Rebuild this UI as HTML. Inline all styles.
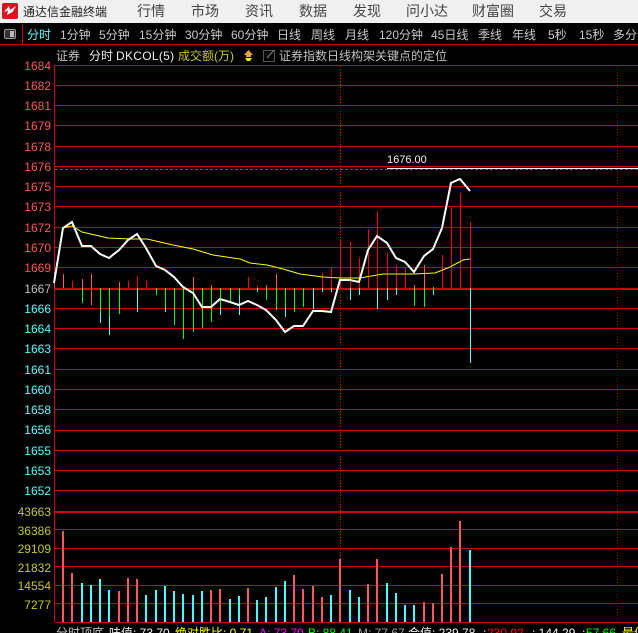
<!DOCTYPE html>
<html><head><meta charset="utf-8">
<style>
html,body{margin:0;padding:0;background:#000;}
body{width:638px;height:633px;overflow:hidden;position:relative;}
svg{position:absolute;left:0;top:0;}
text{font-family:"Liberation Sans","Noto Sans CJK SC",sans-serif;font-size:12px;}
.m{font-size:14px;fill:#444;}
.t{fill:#c8c8c8;}
.p{fill:#ff5858;text-anchor:end;}
.c{fill:#58ffff;text-anchor:end;}
.v{fill:#c8c828;text-anchor:end;}
</style></head>
<body>
<svg width="638" height="633" viewBox="0 0 638 633" xmlns="http://www.w3.org/2000/svg">
<rect width="638" height="633" fill="#000"/>
<rect width="638" height="23" fill="#f0f0f0"/>
<!-- logo -->
<rect x="2" y="3" width="16" height="16" rx="2" fill="#d8141c"/>
<path d="M4 12 L9 6 L10 10 L16 6 L12.500 12 L7 15 L8 10.500 Z" fill="#fff"/>
<text x="23" y="16" style="font-size:12px" fill="#222">通达信金融终端</text>
<text class="m" x="137" y="16">行情</text>
<text class="m" x="191" y="16">市场</text>
<text class="m" x="245" y="16">资讯</text>
<text class="m" x="299" y="16">数据</text>
<text class="m" x="353" y="16">发现</text>
<text class="m" x="406" y="16">问小达</text>
<text class="m" x="472" y="16">财富圈</text>
<text class="m" x="539" y="16">交易</text>
<!-- toolbar -->
<rect x="4.5" y="29.5" width="11" height="9" rx="1.5" fill="#333" stroke="#999"/>
<rect x="10" y="31" width="4" height="6" fill="#bbb"/>
<g shape-rendering="crispEdges" fill="#d00000">
<rect x="22" y="25" width="1" height="19"/>
<rect x="0" y="44" width="638" height="1"/>
</g>
<text x="27" y="39" fill="#58ffff">分时</text>
<text class="t" x="60" y="39">1分钟</text>
<text class="t" x="99" y="39">5分钟</text>
<text class="t" x="139" y="39">15分钟</text>
<text class="t" x="185" y="39">30分钟</text>
<text class="t" x="231" y="39">60分钟</text>
<text class="t" x="277" y="39">日线</text>
<text class="t" x="311" y="39">周线</text>
<text class="t" x="345" y="39">月线</text>
<text class="t" x="379" y="39">120分钟</text>
<text class="t" x="431" y="39">45日线</text>
<text class="t" x="478" y="39">季线</text>
<text class="t" x="512" y="39">年线</text>
<text class="t" x="548" y="39">5秒</text>
<text class="t" x="579" y="39">15秒</text>
<text class="t" x="613" y="39">多分时</text>
<!-- info row -->
<text x="56" y="60" fill="#c0c0c0">证券</text>
<text x="89" y="60" fill="#f0f0f0">分时</text>
<text x="116" y="60" fill="#f0f0f0" style="letter-spacing:.3px">DKCOL(5)</text>
<text x="178" y="60" fill="#c8c828">成交额(万)</text>
<path d="M248.500 50 L253 55 L251 55 L251 57 L246 57 L246 55 L244 55 Z" fill="#f0a040"/>
<path d="M245 58 H252 L250 61 H247 Z" fill="#f0e020"/>
<rect x="263.500" y="50.500" width="11" height="11" fill="none" stroke="#555"/>
<path d="M267 58 L274 50" stroke="#888" fill="none"/>
<text x="279" y="60" fill="#c0c0c0">证券指数日线构架关键点的定位</text>
<!-- grid -->
<g shape-rendering="crispEdges" fill="#d00000">
<rect x="54" y="65" width="1" height="557"/>
<rect x="55" y="65" width="583" height="1"/><rect x="55" y="85" width="583" height="1"/><rect x="55" y="105" width="583" height="1"/><rect x="55" y="125" width="583" height="1"/><rect x="55" y="146" width="583" height="1"/><rect x="55" y="166" width="583" height="1"/><rect x="55" y="186" width="583" height="1"/><rect x="55" y="206" width="583" height="1"/><rect x="55" y="227" width="583" height="1"/><rect x="55" y="247" width="583" height="1"/><rect x="55" y="267" width="583" height="1"/><rect x="55" y="288" width="583" height="2"/><rect x="55" y="308" width="583" height="1"/><rect x="55" y="328" width="583" height="1"/><rect x="55" y="348" width="583" height="1"/><rect x="55" y="369" width="583" height="1"/><rect x="55" y="389" width="583" height="1"/><rect x="55" y="409" width="583" height="1"/><rect x="55" y="430" width="583" height="1"/><rect x="55" y="450" width="583" height="1"/><rect x="55" y="470" width="583" height="1"/><rect x="55" y="490" width="583" height="1"/>
<rect x="55" y="511" width="583" height="2"/><rect x="55" y="529" width="583" height="1"/><rect x="55" y="548" width="583" height="1"/><rect x="55" y="566" width="583" height="1"/><rect x="55" y="585" width="583" height="1"/><rect x="55" y="603" width="583" height="1"/><rect x="55" y="622" width="583" height="1"/>
</g>
<path d="M340.500 66 V560" stroke="#e00000" stroke-dasharray="1 2" shape-rendering="crispEdges"/>
<path d="M617.500 66 V622" stroke="#a00000" stroke-dasharray="1 2" shape-rendering="crispEdges"/>
<path d="M55 169.500 H638" stroke="#a020a0" stroke-dasharray="3 2" shape-rendering="crispEdges"/>
<path d="M387 168.500 H638" stroke="#fff" shape-rendering="crispEdges"/>
<text x="387" y="163" style="font-size:11px" fill="#f0f0f0">1676.00</text>
<!-- price labels -->
<text class="p" x="51" y="70">1684</text>
<text class="p" x="51" y="90">1682</text>
<text class="p" x="51" y="110">1681</text>
<text class="p" x="51" y="130">1679</text>
<text class="p" x="51" y="151">1678</text>
<text class="p" x="51" y="171">1676</text>
<text class="p" x="51" y="191">1675</text>
<text class="p" x="51" y="211">1673</text>
<text class="p" x="51" y="232">1672</text>
<text class="p" x="51" y="252">1670</text>
<text class="p" x="51" y="272">1669</text>
<text x="51" y="293" text-anchor="end" fill="#c0c0c0">1667</text>
<text class="c" x="51" y="313">1666</text>
<text class="c" x="51" y="333">1664</text>
<text class="c" x="51" y="353">1663</text>
<text class="c" x="51" y="374">1661</text>
<text class="c" x="51" y="394">1660</text>
<text class="c" x="51" y="414">1658</text>
<text class="c" x="51" y="434">1656</text>
<text class="c" x="51" y="455">1655</text>
<text class="c" x="51" y="475">1653</text>
<text class="c" x="51" y="495">1652</text>
<text class="v" x="51" y="516">43663</text>
<text class="v" x="51" y="535">36386</text>
<text class="v" x="51" y="553">29109</text>
<text class="v" x="51" y="572">21832</text>
<text class="v" x="51" y="590">14554</text>
<text class="v" x="51" y="609">7277</text>
<!-- tick bars -->
<g fill="none" shape-rendering="crispEdges" stroke-width="1">
<path stroke="#ff0000" d="M72.500 281V288M128.500 281V288M137.500 276V288M146.500 281V288M248.500 277V288M257.500 286V288M322.500 273V288M331.500 267V288M340.500 239V288M350.500 242V288M359.500 258V288M368.500 229V288M377.500 211V288M387.500 253V288M396.500 265V288M405.500 267V288M442.500 255V288M451.500 208V288M460.500 193V288M470.500 222V288"/>
<path stroke="#ff5858" d="M54.500 272V288M63.500 274V288M82.500 279V288M91.500 274V305M119.500 282V288M193.500 277V288M211.500 285V288M266.500 285V288M276.500 274V288M414.500 285V288M424.500 265V288"/>
<path stroke="#00ff00" d="M82.500 288V303M100.500 288V313M109.500 288V317M119.500 288V314M156.500 288V295M165.500 288V307M174.500 288V325M183.500 288V339M193.500 288V332M202.500 288V328M211.500 288V322M220.500 288V307M230.500 288V303M239.500 288V295M266.500 288V300M276.500 288V310M285.500 288V307M294.500 288V312M303.500 288V307M414.500 288V306M424.500 288V307M433.500 287V291"/>
<path stroke="#58ffff" d="M100.500 313V323M109.500 317V335M137.500 288V312M165.500 307V312M220.500 307V315M239.500 295V315M257.500 288V292M285.500 307V317M313.500 288V309M322.500 288V292M331.500 288V292M350.500 288V300M359.500 288V295M377.500 288V309M387.500 288V300M396.500 288V295M433.500 291V295M470.500 288V363"/>
</g>
<!-- yellow avg -->
<polyline fill="none" stroke="#ffff00" stroke-width="1" points="63,228 72,226 82,232 108,238 130,239 147,239 173,245 193,249 213,255 240,259 250,263 267,265 283,269 300,274 323,277 340,278 360,278 383,274 413,274 435,273 450,267 463,260 470,259"/>
<!-- white line -->
<polyline fill="none" stroke="#ffffff" stroke-width="2" points="54,283 63,228 72,222 82,246 91,246 100,254 109,258 119,250 128,240 137,234 146,248 156,266 165,270 174,277 183,287 193,293 202,307 211,307 220,299 230,302 239,305 248,301 257,305 266,310 276,320 285,332 294,326 303,326 313,311 322,311 331,312 340,280 350,280 359,282 368,250 377,236 387,243 396,258 405,262 414,272 424,256 433,249 442,228 451,183 460,179 470,191"/>
<!-- volume bars -->
<g fill="none" shape-rendering="crispEdges" stroke-width="2">
<path stroke="#ff5858" d="M63 531V622M72 573V622M119 591V622M128 578V622M137 579V622M211 590V622M220 589V622M248 588V622M294 575V622M303 589V622M313 586V622M322 597V622M340 559V622M368 584V622M377 559V622M424 602V622M433 603V622M442 574V622M451 547V622M460 521V622"/>
<path stroke="#48ffff" d="M82 583V622M91 585V622M100 579V622M109 590V622M146 595V622M156 590V622M165 586V622M174 591V622M183 594V622M193 595V622M202 591V622M230 599V622M239 596V622M257 600V622M266 597V622M276 587V622M285 581V622M331 595V622M350 590V622M359 597V622M387 583V622M396 593V622M405 605V622M414 605V622M470 550V622"/>
</g>
<!-- bottom row clipped -->
<text x="56" y="637" fill="#c0c0c0">分时顶底</text>
<text x="109" y="637" fill="#f0f0f0">味值: 73.70</text>
<text x="175" y="637" fill="#ffff00">绝对胜比: 0.71</text>
<text x="259" y="637" fill="#ff00ff">A: 73.70</text>
<text x="308" y="637" fill="#00ff00">B: 88.41</text>
<text x="358" y="637" fill="#a0a0a0">M: 77.67</text>
<text x="408" y="637" fill="#f0f0f0">合值: 239.78</text>
<text x="483" y="637" fill="#f0f0f0">:</text>
<text x="487" y="637" fill="#ff0000">230.92</text>
<text x="532" y="637" fill="#f0f0f0">: 144.29</text>
<text x="582" y="637" fill="#f0f0f0">:</text>
<text x="586" y="637" fill="#00ff00">57.66</text>
<text x="622" y="637" fill="#ffff00">最值</text>
</svg>
</body></html>
